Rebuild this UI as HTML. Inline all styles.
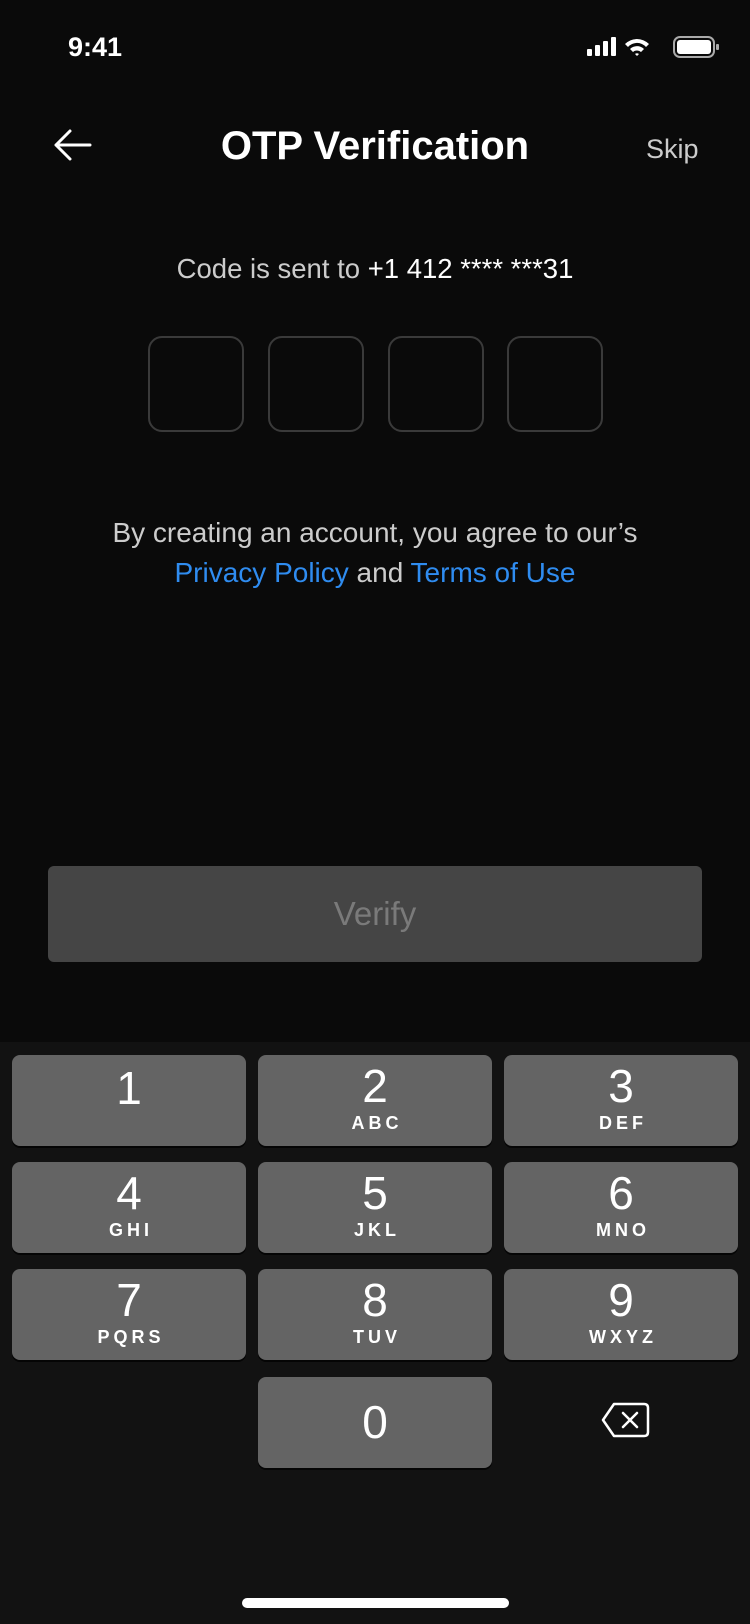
<!DOCTYPE html>
<html><head><meta charset="utf-8"><style>
body{margin:0;width:750px;height:1624px;background:#0a0a0a;position:relative;overflow:hidden;font-family:"Liberation Sans",sans-serif;color:#fff}
.a{position:absolute}
.box{position:absolute;top:336px;width:96px;height:96px;border:2px solid #3a3a3a;border-radius:14px;box-sizing:border-box}
.kb{position:absolute;left:0;top:1042px;width:750px;height:582px;background:#121212}
.k{position:absolute;width:234px;height:91px;background:#646464;border-radius:8px;box-shadow:0 2px 0 #050505;text-align:center}
.k .n{font-size:46px;line-height:46px;margin-top:8px}
.k .l{font-size:18px;font-weight:bold;letter-spacing:4px;margin-top:4px;padding-left:4px}
</style></head><body>
<div class="a" style="left:68px;top:32px;font-size:27px;font-weight:bold">9:41</div>
<svg class="a" style="left:585px;top:35px" width="136" height="24" viewBox="0 0 136 24">
<rect x="2" y="14" width="5" height="7" rx="1" fill="#fff"/><rect x="10" y="10" width="5" height="11" rx="1" fill="#fff"/><rect x="18" y="6" width="5" height="15" rx="1" fill="#fff"/><rect x="26" y="2" width="5" height="19" rx="1" fill="#fff"/>
<path d="M40 9 A17 17 0 0 1 64 9 L61 12 A12 12 0 0 0 43 12 Z M45 14 A10 10 0 0 1 59 14 L56 17 A6 6 0 0 0 48 17 Z M50 19 L52 21 L54 19 A3 3 0 0 0 50 19Z" fill="#fff"/>
<rect x="89" y="2" width="40" height="20" rx="6" fill="none" stroke="#aaa" stroke-width="2"/><rect x="92" y="5" width="34" height="14" rx="3" fill="#fff"/><rect x="131" y="9" width="3" height="6" rx="1" fill="#aaa"/>
</svg>
<svg class="a" style="left:52px;top:128px" width="40" height="34" viewBox="0 0 40 34"><path d="M38 17H4M18 3L4 17L18 31" fill="none" stroke="#fff" stroke-width="3" stroke-linecap="round" stroke-linejoin="round"/></svg>
<div class="a" style="left:0;width:750px;top:124px;text-align:center;font-size:40px;font-weight:bold">OTP Verification</div>
<div class="a" style="left:646px;top:134px;font-size:27px;color:#ccc">Skip</div>
<div class="a" style="left:0;width:750px;top:253px;text-align:center;font-size:27.5px;color:#ccc">Code is sent to <span style="color:#fff">+1 412 **** ***31</span></div>
<div class="box" style="left:148px"></div><div class="box" style="left:268px"></div><div class="box" style="left:388px"></div><div class="box" style="left:507px"></div>
<div class="a" style="left:0;width:750px;top:513px;text-align:center;font-size:28px;line-height:40px;color:#ccc">By creating an account, you agree to our’s<br><span style="color:#2f8cf0">Privacy Policy</span> and <span style="color:#2f8cf0">Terms of Use</span></div>
<div class="a" style="left:48px;top:866px;width:654px;height:96px;background:#454545;border-radius:6px;text-align:center;line-height:96px;font-size:33px;color:#7a7a7a">Verify</div>
<div class="kb">
<div class="k" style="left:12px;top:13px"><div class="n" style="margin-top:10px">1</div></div>
<div class="k" style="left:258px;top:13px"><div class="n">2</div><div class="l">ABC</div></div>
<div class="k" style="left:504px;top:13px"><div class="n">3</div><div class="l">DEF</div></div>
<div class="k" style="left:12px;top:120px"><div class="n">4</div><div class="l">GHI</div></div>
<div class="k" style="left:258px;top:120px"><div class="n">5</div><div class="l">JKL</div></div>
<div class="k" style="left:504px;top:120px"><div class="n">6</div><div class="l">MNO</div></div>
<div class="k" style="left:12px;top:227px"><div class="n">7</div><div class="l">PQRS</div></div>
<div class="k" style="left:258px;top:227px"><div class="n">8</div><div class="l">TUV</div></div>
<div class="k" style="left:504px;top:227px"><div class="n">9</div><div class="l">WXYZ</div></div>
<div class="k" style="left:258px;top:335px"><div class="n" style="margin-top:22px">0</div></div>
<svg class="a" style="left:600px;top:359px" width="50" height="38" viewBox="0 0 50 38"><path d="M14 3H44Q48 3 48 7V31Q48 35 44 35H14L3 19Z" fill="none" stroke="#fff" stroke-width="2.5" stroke-linejoin="round"/><path d="M23 12L37 26M37 12L23 26" stroke="#fff" stroke-width="2.5" stroke-linecap="round"/></svg>
<div class="a" style="left:242px;top:556px;width:267px;height:10px;border-radius:5px;background:#fff"></div>
</div>
</body></html>
